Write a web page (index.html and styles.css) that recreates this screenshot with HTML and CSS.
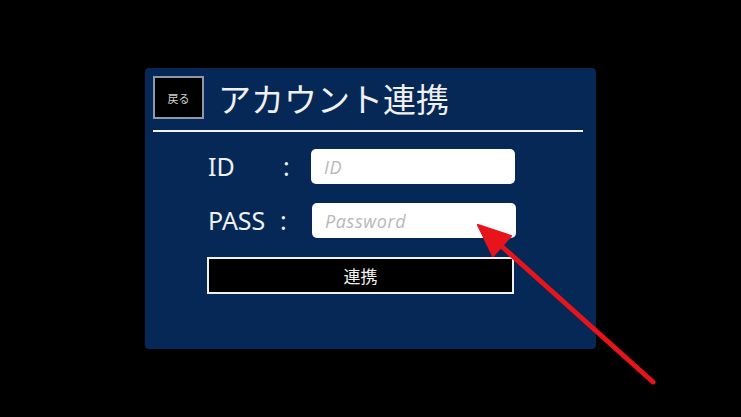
FILE: index.html
```html
<!DOCTYPE html>
<html lang="ja">
<head>
<meta charset="utf-8">
<title>アカウント連携</title>
<link rel="stylesheet" href="styles.css">
</head>
<body>
<div class="stage">
  <section class="panel">
    <header class="header">
      <button class="back" type="button">戻る</button>
      <h1 class="title">アカウント連携</h1>
    </header>
    <div class="rule"></div>
    <form class="form">
      <div class="row">
        <span class="label">ID</span>
        <span class="colon colon-id">:</span>
        <input class="field" type="text" placeholder="ID">
      </div>
      <div class="row">
        <span class="label">PASS</span>
        <span class="colon">:</span>
        <input class="field field-pass" type="password" placeholder="Password">
      </div>
      <button class="submit" type="button">連携</button>
    </form>
  </section>
</div>
<svg class="arrow" width="741" height="417" viewBox="0 0 741 417">
  <line x1="653" y1="382" x2="498" y2="243" stroke="#e8141c" stroke-width="5" stroke-linecap="round"/>
  <polygon points="478,225 511,236 493,256" fill="#e8141c" stroke="#e8141c" stroke-width="2" stroke-linejoin="round"/>
</svg>
</body>
</html>
```

FILE: styles.css
```css
html, body {
  margin: 0;
  padding: 0;
  background: #000;
}
body {
  width: 741px;
  height: 417px;
  position: relative;
  overflow: hidden;
  font-family: "Noto Sans", "Noto Sans CJK JP", sans-serif;
}
.stage {
  padding: 68px 0 0 145px;
}
.panel {
  width: 451px;
  height: 281px;
  box-sizing: border-box;
  background: #052856;
  border-radius: 4px;
  padding: 8px 13px 0 8px;
}
.header {
  display: flex;
  align-items: center;
  gap: 14px;
  height: 43px;
}
.back {
  width: 51px;
  height: 43px;
  box-sizing: border-box;
  border: 2px solid #8d98a8;
  background: #000;
  color: #cfcfcf;
  font-family: "Noto Sans CJK JP", sans-serif;
  font-size: 11px;
  padding: 0;
  display: flex;
  align-items: center;
  justify-content: center;
}
.title {
  margin: 0;
  font-family: "Noto Sans CJK JP", sans-serif;
  font-weight: 400;
  font-size: 33px;
  line-height: 1;
  color: #f0f0f0;
  position: relative;
  top: 1px;
}
.rule {
  height: 2px;
  background: #f2f2f2;
  margin-top: 11px;
}
.form {
  margin: 17px 0 0 54px;
  display: flex;
  flex-direction: column;
  gap: 19px;
}
.row {
  display: grid;
  grid-template-columns: 72px 31px 205px;
  align-items: center;
  height: 35px;
  margin-left: 1px;
}
.label, .colon {
  color: #f0f0f0;
  font-size: 25px;
  line-height: 1;
}
.colon-id {
  padding-left: 3px;
}
.field {
  width: 204px;
  height: 35px;
  box-sizing: border-box;
  border: none;
  border-radius: 5px;
  background: #fff;
  padding: 0 0 0 13px;
  font-family: "Open Sans", sans-serif;
  font-size: 18px;
  font-style: italic;
  letter-spacing: 0.6px;
  outline: none;
}
.field-pass {
  margin-left: 1px;
}
.field::placeholder {
  color: #b8b8b8;
  font-style: italic;
}
.submit {
  width: 307px;
  height: 37px;
  box-sizing: border-box;
  border: 2px solid #f0f0f0;
  background: #000;
  color: #f0f0f0;
  font-family: "Noto Sans CJK JP", sans-serif;
  font-size: 17px;
  padding: 0;
}
.arrow {
  position: absolute;
  left: 0;
  top: 0;
  pointer-events: none;
}
```
